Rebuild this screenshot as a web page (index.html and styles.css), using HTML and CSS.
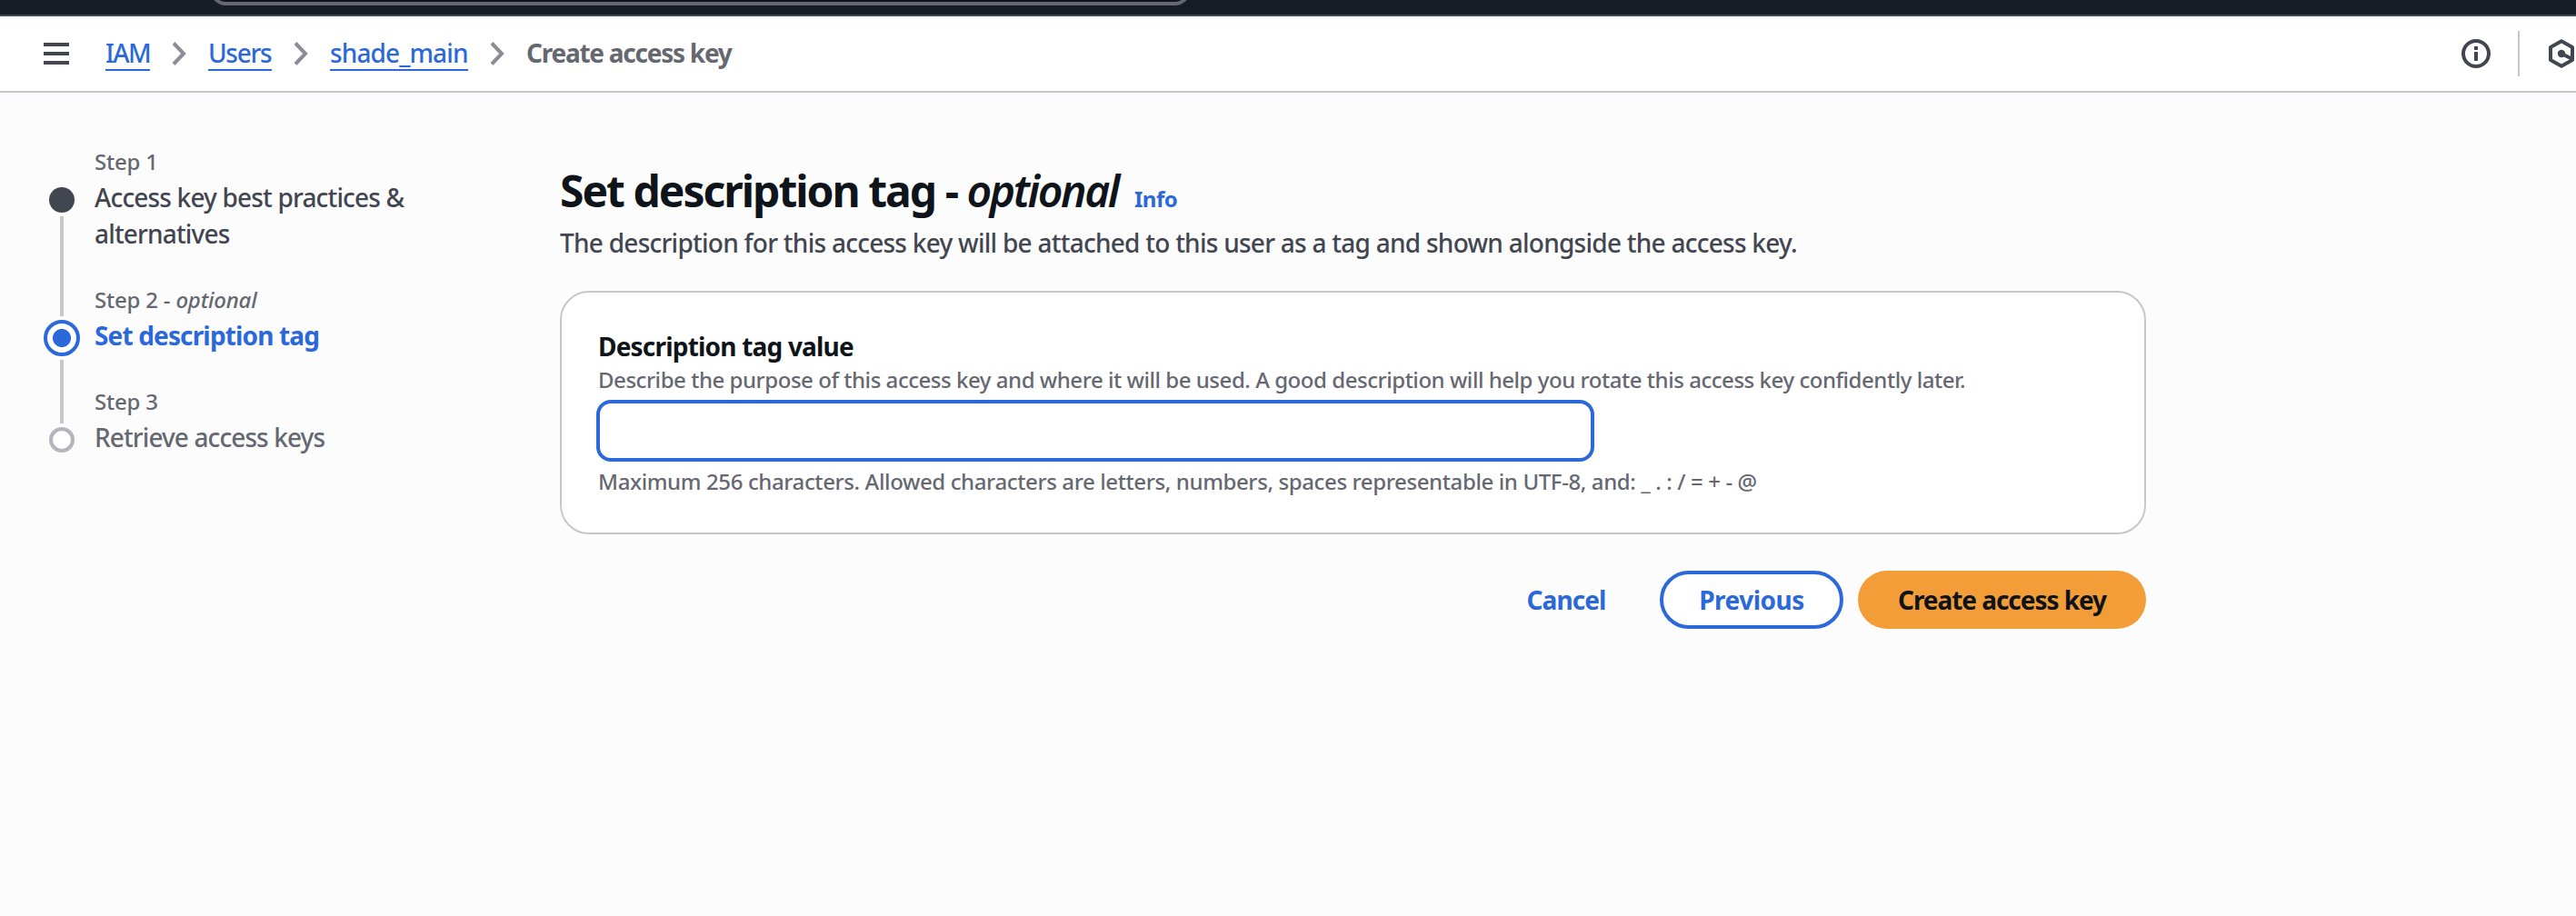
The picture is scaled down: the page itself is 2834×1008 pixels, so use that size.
FILE: index.html
```html
<!DOCTYPE html>
<html lang="en">
<head>
<meta charset="utf-8">
<title>Create access key</title>
<link rel="stylesheet" href="styles.css">
</head>
<body>
<header class="topbar"><div class="search"></div></header>
<nav class="bar">
  <svg class="menu" width="28" height="24" viewBox="0 0 28 24"><path d="M0 2h28M0 12h28M0 22h28" stroke="#424650" stroke-width="4"/></svg>
  <div class="crumbs">
    <a class="link iam">IAM</a>
    <svg class="chev" width="16" height="26" viewBox="0 0 16 26"><path d="M2 1.5 13 13 2 24.5"/></svg>
    <a class="link users">Users</a>
    <svg class="chev" width="16" height="26" viewBox="0 0 16 26"><path d="M2 1.5 13 13 2 24.5"/></svg>
    <a class="link user">shade_main</a>
    <svg class="chev" width="16" height="26" viewBox="0 0 16 26"><path d="M2 1.5 13 13 2 24.5"/></svg>
    <span class="current">Create access key</span>
  </div>
  <div class="tools">
    <svg width="32" height="32" viewBox="0 0 32 32"><circle cx="16" cy="16" r="14" fill="none" stroke="#424650" stroke-width="4"/><path d="M14 8h4v4h-4zM14 14h4v10h-4z" fill="#424650"/></svg>
    <span class="divider"></span>
    <svg width="30" height="32" viewBox="0 0 30 32"><path d="M15 2.3 27 9v14L15 29.7 3 23V9z" fill="none" stroke="#424650" stroke-width="4" stroke-linejoin="round"/><circle cx="15" cy="16" r="4.2" fill="#424650"/><path d="M15 16l11 5.5" stroke="#424650" stroke-width="4"/></svg>
  </div>
</nav>
<div class="page">
  <aside class="steps">
    <div class="step">
      <div class="marker"><span class="dot done"></span><span class="line rest"></span></div>
      <div class="text"><div class="num">Step 1</div><div class="name visited">Access key best practices &amp;<br>alternatives</div></div>
    </div>
    <div class="step">
      <div class="marker"><span class="line before"></span><span class="dot active"></span><span class="line rest"></span></div>
      <div class="text"><div class="num">Step 2 - <i>optional</i></div><div class="name now">Set description tag</div></div>
    </div>
    <div class="step">
      <div class="marker"><span class="line before-last"></span><span class="dot todo"></span></div>
      <div class="text"><div class="num">Step 3</div><div class="name">Retrieve access keys</div></div>
    </div>
  </aside>
  <main class="main">
    <h1 class="title"><span>Set description tag - <i>optional</i></span><a class="info">Info</a></h1>
    <p class="lead">The description for this access key will be attached to this user as a tag and shown alongside the access key.</p>
    <section class="card">
      <label class="label" for="tag">Description tag value</label>
      <div class="hint">Describe the purpose of this access key and where it will be used. A good description will help you rotate this access key confidently later.</div>
      <input class="input" id="tag" type="text">
      <div class="hint limit">Maximum 256 characters. Allowed characters are letters, numbers, spaces representable in UTF-8, and: _ . : / = + - @</div>
    </section>
    <div class="actions">
      <button class="btn cancel">Cancel</button>
      <button class="btn previous">Previous</button>
      <button class="btn create">Create access key</button>
    </div>
  </main>
</div>
</body>
</html>
```
FILE: styles.css
```css
* { box-sizing: border-box; }
body {
  margin: 0;
  height: 1008px;
  overflow: hidden;
  background: #fcfcfd;
  font: 500 28px/40px "Noto Sans", "Open Sans", sans-serif;
  letter-spacing: -0.8px;
  color: #424650;
}
svg { display: block; flex: none; }

.topbar {
  height: 18px;
  padding-left: 232px;
  background: #161d26;
  border-bottom: 2px solid #424650;
  overflow: hidden;
}
.search {
  width: 1077px;
  height: 64px;
  margin-top: -58px;
  background: #0f141a;
  border: 4px solid #656871;
  border-radius: 16px;
}

.bar {
  display: flex;
  align-items: center;
  height: 84px;
  padding-left: 48px;
  background: #fff;
  border-bottom: 2px solid #c6c6cd;
}
.crumbs { display: flex; align-items: center; margin-left: 40px; }
.link {
  height: 38px;
  line-height: 36px;
  color: #2b68d9;
  border-bottom: 2px solid #2b68d9;
  white-space: nowrap;
}
.iam { width: 49px; letter-spacing: -1.6px; }
.users { width: 70px; letter-spacing: -1.3px; }
.user { width: 152px; letter-spacing: -0.88px; }
.chev { margin: 0 24px; fill: none; stroke: #8c8c94; stroke-width: 4; }
.current { font-weight: 700; line-height: 36px; padding-bottom: 2px; letter-spacing: -1.25px; color: #656871; white-space: nowrap; }
.tools { display: flex; align-items: center; margin-left: auto; }
.divider { width: 2px; height: 50px; margin: 0 31px 0 30px; background: #c6c6cd; }
.tools svg:last-child { margin-right: 1px; }

.page { display: flex; }
.steps { flex: none; width: 616px; padding: 56px 0 0 48px; }
.step { display: flex; }
.marker { display: flex; flex-direction: column; align-items: center; width: 40px; margin-right: 16px; }
.line { width: 4px; background: #c6c6cd; }
.rest { flex: 1; }
.before { height: 38px; }
.before-last { height: 44px; }
.dot { flex: none; margin: 4px 0; border-radius: 50%; }
.done { width: 28px; height: 28px; margin-top: 48px; background: #424650; }
.active { width: 40px; height: 40px; border: 4px solid #2b68d9; background: radial-gradient(circle, #2b68d9 9.6px, #fff 10.4px); }
.todo { width: 28px; height: 28px; border: 4px solid #b4b4bb; background: #fff; }
.text { padding-bottom: 32px; white-space: nowrap; }
.num { font-size: 24px; letter-spacing: -0.2px; color: #656871; }
.name { margin-top: -1px; padding-bottom: 1px; letter-spacing: -0.9px; color: #656871; }
.visited { letter-spacing: -0.83px; color: #424650; }
.now { font-weight: 700; color: #2b68d9; letter-spacing: -0.85px; }

.main { width: 1745px; padding-top: 78px; }
.title { display: flex; align-items: baseline; gap: 18px; margin: 0; font-size: 48px; line-height: 60px; letter-spacing: -2px; color: #0f141a; }
.title i { font-weight: 600; letter-spacing: -2.4px; }
.info { font-size: 24px; line-height: 32px; letter-spacing: -0.5px; color: #2b68d9; }
.lead { margin: 7px 0 33px; letter-spacing: -0.74px; white-space: nowrap; }
.card { display: flex; flex-direction: column; height: 268px; padding: 39px 40px; background: #fff; border: 2px solid #c6c6cd; border-radius: 32px; }
.label { font-weight: 700; letter-spacing: -0.8px; color: #0f141a; }
.hint { font-size: 24px; line-height: 32px; margin-top: 1px; letter-spacing: -0.46px; color: #656871; white-space: nowrap; }
.input { width: 1098px; height: 68px; margin: 6px 0 0 -2px; border: 4px solid #2b68d9; border-radius: 16px; background: #fff; outline: 0; }
.limit { margin-top: 6px; letter-spacing: -0.38px; }
.actions { display: flex; justify-content: flex-end; margin-top: 40px; }
.btn { height: 64px; padding: 0; border: 0; border-radius: 32px; background: none; font: inherit; font-weight: 700; color: #2b68d9; white-space: nowrap; }
.cancel { width: 174px; letter-spacing: -0.9px; }
.previous { width: 202px; margin: 0 16px; border: 4px solid #2b68d9; background: #fff; letter-spacing: -0.5px; }
.create { width: 317px; background: #f29d38; color: #0f141a; letter-spacing: -1.05px; }
```
